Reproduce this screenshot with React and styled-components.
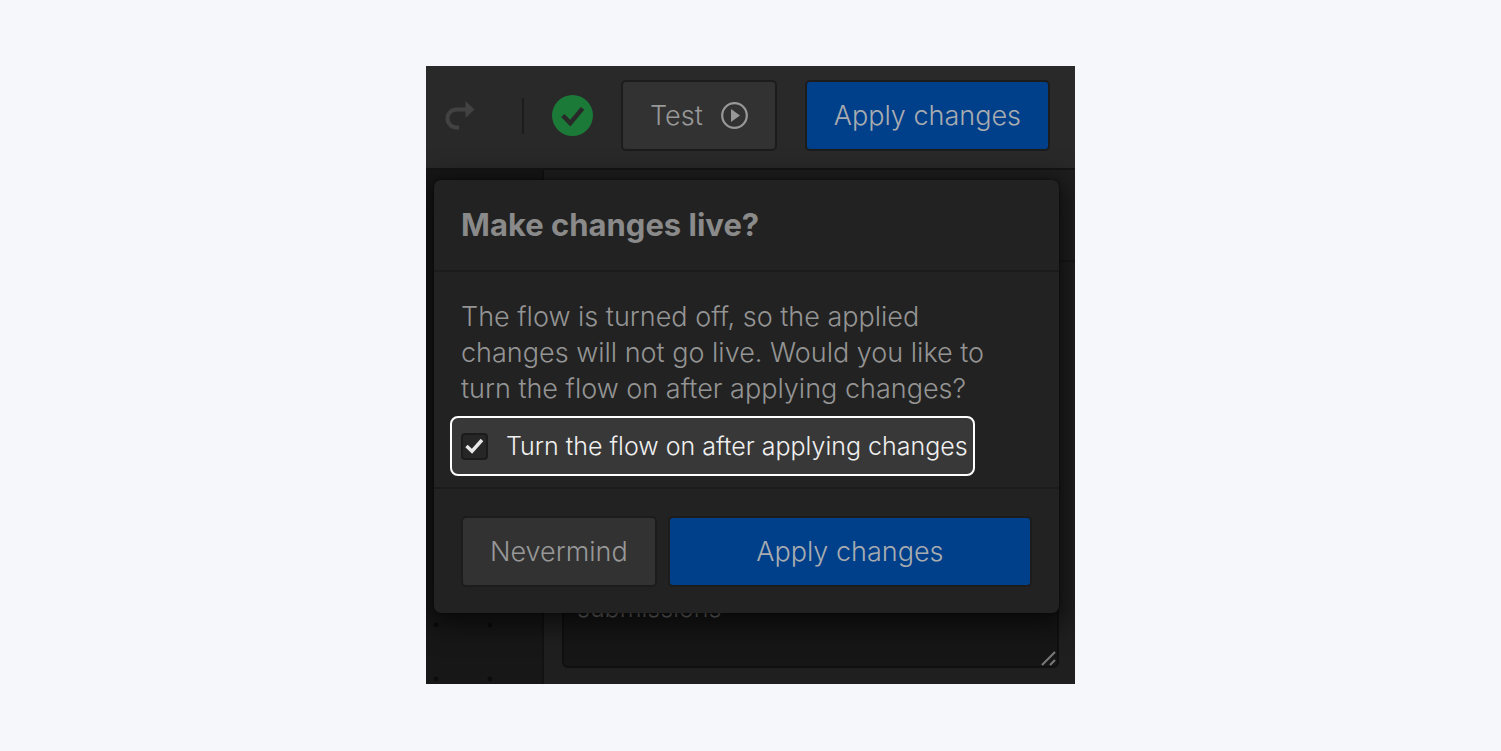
import React, { useState } from 'react';
import styled, { createGlobalStyle, css } from 'styled-components';

const GlobalStyle = createGlobalStyle`
  *,
  *::before,
  *::after {
    box-sizing: border-box;
  }

  body {
    margin: 0;
    background: #f5f7fa;
    font-family: Inter, 'Liberation Sans', sans-serif;
    font-size: 27px;
    font-weight: 300;
    line-height: 36px;
    color: #949494;
  }

  button,
  input,
  textarea {
    font: inherit;
    margin: 0;
  }
`;

const Page = styled.main`
  display: flex;
  justify-content: center;
  padding: 66px 24px;
`;

const Editor = styled.div`
  width: 100%;
  max-width: 649px;
  overflow: hidden;
  background: #1f1f1f;
`;

const Toolbar = styled.header`
  display: flex;
  align-items: center;
  justify-content: flex-end;
  gap: 28px;
  padding: 14px 25px 17px 18px;
  background: #292929;
  border-bottom: 2px solid #151515;
`;

const IconButton = styled.button`
  display: flex;
  margin-right: auto;
  padding: 0;
  border: 0;
  background: none;
  color: #424242;
`;

const Divider = styled.span`
  width: 2px;
  height: 36px;
  background: #1c1c1c;
`;

const StatusIcon = styled.svg`
  display: block;
`;

const Button = styled.button`
  display: flex;
  align-items: center;
  justify-content: center;
  gap: 18px;
  height: 71px;
  padding: 0 27px;
  border: 2px solid #1c1c1c;
  border-radius: 5px;
  background: #323232;
  color: #989898;
  cursor: pointer;

  ${({ $primary }) =>
    $primary &&
    css`
      background: #003f8a;
      color: #a8acb0;
    `}

  ${({ $grow }) =>
    $grow &&
    css`
      flex: 1;
    `}
`;

const Workspace = styled.div`
  display: grid;
`;

const Backdrop = styled.div`
  grid-area: 1 / 1;
  display: flex;
`;

const Canvas = styled.div`
  flex: 0 0 118px;
  border-right: 2px solid #121212;
  background-color: #171717;
  background-image: radial-gradient(circle, #0c0c0c 2px, transparent 3px);
  background-size: 54px 54px;
  background-position: -17px 50px;
`;

const SidePanel = styled.aside`
  flex: 1;
  display: flex;
  flex-direction: column;
  justify-content: space-between;
`;

const PanelHeader = styled.div`
  height: 92px;
  border-bottom: 2px solid #191919;
`;

const Field = styled.div`
  position: relative;
  margin: 0 16px 16px 18px;
`;

const Description = styled.textarea`
  display: block;
  width: 100%;
  height: 100px;
  padding: 20px 13px;
  border: 2px solid #101010;
  border-radius: 6px;
  background: #161616;
  color: #6c6c6c;
  font-size: 25px;
  resize: none;
`;

const ResizeHandle = styled.svg`
  position: absolute;
  right: 2px;
  bottom: 1px;
`;

const Dialog = styled.form`
  grid-area: 1 / 1;
  position: relative;
  margin: 10px 16px 71px 8px;
  border-radius: 7px;
  background: #222;
  box-shadow: 0 6px 28px 6px rgba(0, 0, 0, 0.6), 0 0 3px rgba(0, 0, 0, 0.5);
`;

const DialogTitle = styled.h2`
  margin: 0;
  padding: 27px;
  border-bottom: 2px solid #1b1b1b;
  color: #8a8a8a;
  font-size: 31px;
  font-weight: 700;
  line-height: 36px;
`;

const DialogBody = styled.div`
  padding: 27px 16px 11px;
`;

const Message = styled.p`
  margin: 0 11px 9px;
`;

const Option = styled.label`
  display: inline-flex;
  align-items: center;
  gap: 18px;
  height: 60px;
  padding: 0 5px 0 9px;
  border: 2px solid #fff;
  border-radius: 8px;
  background: #383838;
  color: #f0f0f0;
  font-size: 25px;
  vertical-align: top;
`;

const CheckWrap = styled.span`
  display: grid;
  place-items: center;

  > * {
    grid-area: 1 / 1;
  }

  svg {
    pointer-events: none;
  }
`;

const CheckInput = styled.input`
  appearance: none;
  width: 27px;
  height: 27px;
  border: 2px solid #1b1b1b;
  border-radius: 4px;
  background: #262626;
`;

const DialogFooter = styled.div`
  display: flex;
  gap: 11px;
  padding: 27px 27px 26px;
  border-top: 2px solid #1b1b1b;
`;

const RedoIcon = () => (
  <svg width="32" height="32" viewBox="0 0 32 32" aria-hidden="true">
    <path d="M15 27.500H12.500A9 9 0 0 1 12.500 9.500H23" fill="none" stroke="currentColor" strokeWidth="4" />
    <path d="M21.500 1L30.500 9.500L21.500 18Z" fill="currentColor" />
  </svg>
);

const PlayIcon = () => (
  <svg width="27" height="27" viewBox="0 0 27 27" aria-hidden="true">
    <circle cx="13.5" cy="13.5" r="12.3" fill="none" stroke="currentColor" strokeWidth="2.2" />
    <path d="M10 7L19 13.500L10 20Z" fill="currentColor" />
  </svg>
);

export default function App() {
  const [turnOn, setTurnOn] = useState(true);

  return (
    <>
      <GlobalStyle />
      <Page>
        <Editor>
          <Toolbar>
            <IconButton type="button" aria-label="Redo">
              <RedoIcon />
            </IconButton>
            <Divider />
            <StatusIcon width="41" height="41" viewBox="0 0 40 40" aria-hidden="true">
              <circle cx="20" cy="20" r="20" fill="#1b7a37" />
              <path d="M10.500 20L17.800 27.500L29.800 13" fill="none" stroke="#292929" strokeWidth="4.400" />
            </StatusIcon>
            <Button type="button">
              Test
              <PlayIcon />
            </Button>
            <Button type="button" $primary>
              Apply changes
            </Button>
          </Toolbar>

          <Workspace>
            <Backdrop>
              <Canvas />
              <SidePanel>
                <PanelHeader />
                <Field>
                  <Description aria-label="Description" defaultValue="submissions" />
                  <ResizeHandle width="16" height="16" viewBox="0 0 16 16" aria-hidden="true">
                    <path d="M1 14L14 1M9 14L14 9" fill="none" stroke="#777" strokeWidth="2.200" />
                  </ResizeHandle>
                </Field>
              </SidePanel>
            </Backdrop>

            <Dialog role="dialog" aria-labelledby="dialog-title" onSubmit={(e) => e.preventDefault()}>
              <DialogTitle id="dialog-title">Make changes live?</DialogTitle>
              <DialogBody>
                <Message>
                  The flow is turned off, so the applied changes will not go live. Would you like to turn the flow on
                  after applying changes?
                </Message>
                <Option htmlFor="turn-on">
                  <CheckWrap>
                    <CheckInput
                      id="turn-on"
                      type="checkbox"
                      checked={turnOn}
                      onChange={(e) => setTurnOn(e.target.checked)}
                    />
                    {turnOn && (
                      <svg width="19" height="16" viewBox="0 0 19 16" aria-hidden="true">
                        <path d="M1.500 8L7 13.200L17 2" fill="none" stroke="#e8e8e8" strokeWidth="3.400" />
                      </svg>
                    )}
                  </CheckWrap>
                  Turn the flow on after applying changes
                </Option>
              </DialogBody>
              <DialogFooter>
                <Button type="button">Nevermind</Button>
                <Button type="submit" $primary $grow>
                  Apply changes
                </Button>
              </DialogFooter>
            </Dialog>
          </Workspace>
        </Editor>
      </Page>
    </>
  );
}
